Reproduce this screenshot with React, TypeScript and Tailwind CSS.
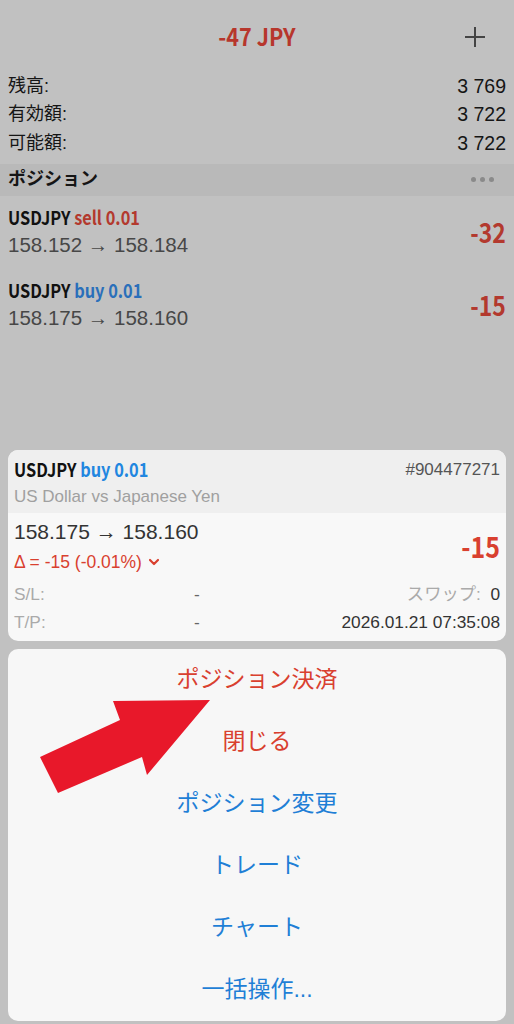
import React from 'react'

// Polices : texte courant façon Helvetica, titres en gras resserré
const SANS = "font-['Liberation_Sans','Noto_Sans_CJK_JP',sans-serif]"
const COND = "font-['Noto_Sans_CJK_JP',sans-serif] font-bold inline-block"

const ACCOUNT = [
  { label: '残高:', value: '3 769' },
  { label: '有効額:', value: '3 722' },
  { label: '可能額:', value: '3 722' },
]

const POSITIONS = [
  { side: 'sell', from: '158.152', to: '158.184', profit: '-32' },
  { side: 'buy', from: '158.175', to: '158.160', profit: '-15' },
]

const MENU = [
  { label: 'ポジション決済', red: true },
  { label: '閉じる', red: true },
  { label: 'ポジション変更', red: false },
  { label: 'トレード', red: false },
  { label: 'チャート', red: false },
  { label: '一括操作...', red: false },
]

export default function App() {
  return (
    <div className={`relative w-full h-[1024px] overflow-hidden bg-[#c1c1c1] ${SANS}`}>

      {/* Barre du haut */}
      <div className="relative h-[72px] flex items-center justify-center">
        <span className={`${COND} scale-x-[0.9] text-[24px] text-[#b7362c]`}>-47 JPY</span>
        <svg className="absolute right-[28px] top-[26px] w-[22px] h-[22px]" viewBox="0 0 22 22" stroke="#444" strokeWidth={2}>
          <path d="M11 1v20M1 11h20" />
        </svg>
      </div>

      {/* Solde du compte */}
      <div className="px-2">
        {ACCOUNT.map(a => (
          <div key={a.label} className="h-[28.5px] flex items-center justify-between text-[18px] text-[#151515]">
            <span>{a.label}</span>
            <span className="text-[19.5px]">{a.value}</span>
          </div>
        ))}
      </div>

      {/* Entête positions */}
      <div className="mt-[6px] h-[32px] bg-[#b9b9b9] flex items-center justify-between pl-2 pr-[20px]">
        <span className="font-bold text-[18px] text-[#151515]">ポジション</span>
        <span className="flex gap-[4px]">
          <span className="w-[5px] h-[5px] rounded-full bg-[#8a8a8a]" />
          <span className="w-[5px] h-[5px] rounded-full bg-[#8a8a8a]" />
          <span className="w-[5px] h-[5px] rounded-full bg-[#8a8a8a]" />
        </span>
      </div>

      {/* Liste des positions */}
      {POSITIONS.map((p, i) => (
        <div key={i} className="h-[73px] flex items-center justify-between px-2">
          <div className="flex flex-col items-start">
            <div className={`${COND} scale-x-[0.86] origin-left text-[19px] leading-[26px] text-[#111] whitespace-nowrap`}>
              USDJPY <span className={p.side === 'sell' ? 'text-[#b3392e]' : 'text-[#2a6fba]'}>{p.side} 0.01</span>
            </div>
            <div className="text-[20.5px] leading-[30px] text-[#474747]">{p.from} → {p.to}</div>
          </div>
          <span className={`${COND} scale-x-[0.85] origin-right text-[27px] text-[#b3392e]`}>{p.profit}</span>
        </div>
      ))}

      {/* Carte détail de la position */}
      <div className="mt-[108px] mx-2 rounded-[10px] overflow-hidden bg-[#f8f8f8]">
        <div className="bg-[#efefef] h-[63px] px-[6px] pt-[6px]">
          <div className="flex justify-between items-center h-[28px]">
            <span className={`${COND} scale-x-[0.86] origin-left text-[19px] text-[#111] whitespace-nowrap`}>
              USDJPY <span className="text-[#2186e0]">buy 0.01</span>
            </span>
            <span className="text-[17px] text-[#555]">#904477271</span>
          </div>
          <div className="text-[17px] leading-[26px] text-[#a0a0a0]">US Dollar vs Japanese Yen</div>
        </div>
        <div className="px-[6px] pb-[4px]">
          <div className="flex justify-between items-center">
            <div className="flex flex-col">
              <div className="text-[21px] leading-[34px] pt-[2px] text-[#333]">158.175 → 158.160</div>
              <div className="flex items-center gap-[6px] text-[17.5px] leading-[26px] text-[#d9402f]">
                Δ = -15 (-0.01%)
                <svg className="w-[12px] h-[12px]" viewBox="0 0 12 12" fill="none" stroke="#d9402f" strokeWidth={2.2} strokeLinecap="round" strokeLinejoin="round">
                  <path d="M2 4l4 4 4-4" />
                </svg>
              </div>
            </div>
            <span className={`${COND} scale-x-[0.86] origin-right text-[29px] text-[#d9402f] pt-[4px]`}>-15</span>
          </div>
          <div className="mt-[6px] flex items-center h-[28px] text-[17.3px]">
            <span className="w-[180px] text-[#aaa]">S/L:</span>
            <span className="text-[#666]">-</span>
            <span className="ml-auto text-[#aaa]">スワップ:&nbsp;&nbsp;<span className="text-[#333]">0</span></span>
          </div>
          <div className="flex items-center h-[28px] text-[17.3px]">
            <span className="w-[180px] text-[#aaa]">T/P:</span>
            <span className="text-[#666]">-</span>
            <span className="ml-auto text-[#333]">2026.01.21 07:35:08</span>
          </div>
        </div>
      </div>

      {/* Menu d'actions */}
      <div className="mt-[8px] mx-2 rounded-[10px] bg-[#f7f7f7] flex flex-col">
        {MENU.map(m => (
          <div key={m.label} className={`h-[62px] flex items-center justify-center text-[23px] ${m.red ? 'text-[#d9402f]' : 'text-[#1f7fd6]'}`}>
            {m.label}
          </div>
        ))}
      </div>

      {/* Flèche rouge d'annotation */}
      <svg className="absolute left-0 top-0 w-[514px] h-[1024px] pointer-events-none" viewBox="0 0 514 1024">
        <polygon points="40,757 120,720 113,701 210,700 147,775 142,757 58,793" fill="#e8182a" />
      </svg>
    </div>
  )
}
